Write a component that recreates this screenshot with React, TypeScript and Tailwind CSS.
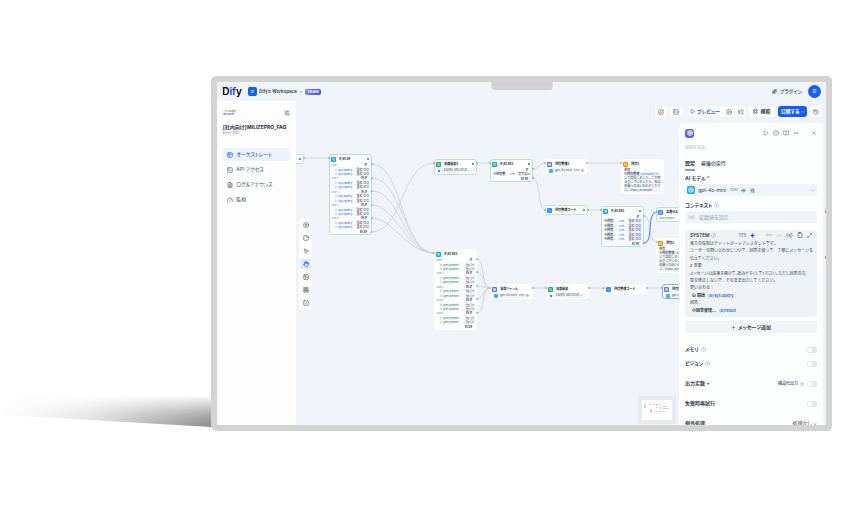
import type { ReactNode } from 'react'
import { clsx } from 'clsx'
import {
  Aperture,
  ArrowRightLeft,
  BookOpen,
  Braces,
  ChevronDown,
  CircleHelp,
  CirclePlay,
  CirclePlus,
  Clipboard,
  Code,
  Ellipsis,
  Eye,
  FileText,
  Gauge,
  GitFork,
  Hand,
  History,
  House,
  Image,
  LayoutGrid,
  ListTree,
  Maximize2,
  MessageSquareText,
  MousePointer2,
  PanelsTopLeft,
  Play,
  Plus,
  Puzzle,
  Rows2,
  SlidersHorizontal,
  Sparkle,
  SquarePen,
  SquareSlash,
  SquareTerminal,
  StickyNote,
  X,
} from 'lucide-react'

const navItems = [
  { label: 'オーケストレート', icon: PanelsTopLeft, active: true },
  { label: 'API アクセス', icon: SquareTerminal },
  { label: 'ログ＆アナウンス', icon: FileText },
  { label: '監視', icon: Gauge },
]

const tools = [
  { label: '追加', icon: CirclePlus },
  { label: 'メモ', icon: StickyNote },
  { label: 'ポインター', icon: MousePointer2 },
  { label: 'ハンド', icon: Hand, active: true },
  { label: 'エクスポート', icon: Image },
  { label: '整列', icon: LayoutGrid },
  { label: '最大化', icon: SquareSlash },
]

// canvas edges, in the same coordinates as the nodes
const edges = [
  'M8 57H33',
  'M76 63C106 63 106 152 138 152',
  'M76 77C106 77 108 152 138 152',
  'M76 90C104 90 108 152 138 152',
  'M76 104C100 104 110 152 138 152',
  'M76 117C96 117 112 152 138 152',
  'M76 131C106 131 106 62 138 62',
  'M181 62H194',
  'M237 68C244 68 242 62 249 62',
  'M237 77C244 77 242 109 249 109',
  'M291 62H325',
  'M292 109H305',
  'M348 115C356 115 352 141 361 141',
  'M181 158C189 158 185 187 194 187',
  'M181 171C188 171 187 187 194 187',
  'M181 185C187 185 188 187 194 187',
  'M181 198C188 198 187 187 194 187',
  'M181 212C189 212 185 187 194 187',
  'M237 187H250',
  'M293 187H308',
  'M351 187H366',
]

const ports = [
  [8, 57], [33, 57], [76, 63], [76, 77], [76, 90], [76, 104], [76, 117], [76, 131],
  [138, 62], [181, 62], [194, 62], [237, 68], [237, 77], [249, 62], [291, 62], [325, 62],
  [249, 109], [292, 109], [305, 109], [348, 115], [348, 142], [361, 111], [361, 141],
  [138, 152], [181, 158], [181, 171], [181, 185], [181, 198], [181, 212],
  [194, 187], [237, 187], [250, 187], [293, 187], [308, 187], [351, 187], [366, 187],
]

const kinds = {
  branch: { icon: GitFork, color: 'bg-[#06aed4]' },
  knowledge: { icon: BookOpen, color: 'bg-[#16b364]' },
  llm: { icon: Aperture, color: 'bg-[#6172f3]' },
  code: { icon: Code, color: 'bg-[#2e90fa]' },
  assign: { icon: ArrowRightLeft, color: 'bg-[#2e90fa]' },
  answer: { icon: MessageSquareText, color: 'bg-[#f79009]' },
}

type NodeProps = {
  place: string
  kind: keyof typeof kinds
  title?: string
  border?: string
  done?: boolean
  children?: ReactNode
}

function FlowNode({ place, kind, title, border = 'border-white', done, children }: NodeProps) {
  const { icon: Icon, color } = kinds[kind]
  return (
    <div className={clsx('absolute w-[43px] rounded-[3px] border bg-white px-px', place, border)}>
      <div className="flex h-2 items-center gap-[3px]">
        <span className={clsx('grid size-[5px] shrink-0 place-items-center rounded-[1px] text-white', color)}>
          <Icon className="size-[3px]" strokeWidth={3} />
        </span>
        {title && <span className="text-[3px] font-bold whitespace-nowrap text-[#101828]">{title}</span>}
        {done && <span className="mr-px ml-auto size-[2px] shrink-0 rounded-full bg-[#079455]" />}
      </div>
      {children}
    </div>
  )
}

function Condition({ name, color }: { name: string; color: string }) {
  return (
    <div className="ml-[3px] flex items-center justify-between bg-[#f9fafb] px-px">
      <span className={clsx('flex items-center gap-px', color)}>
        <Braces className="size-[2px]" />
        {name}
      </span>
      <span className="font-bold text-[#344054]">
        含む <span className="font-normal text-[#667085]">回答</span>
      </span>
    </div>
  )
}

function CaseRows({ name, color }: { name: string; color: string }) {
  return (
    <div className="grid h-[71px] auto-rows-fr text-[3px] leading-[4px] whitespace-nowrap">
      {[1, 2, 3, 4, 5].map((n) => (
        <div key={n} className="row-span-3 grid grid-rows-3">
          <div className="flex justify-between pr-[3px]">
            <span className="text-[2px] text-[#667085]">CASE {n}</span>
            <b className="text-[#344054]">{n === 1 ? 'IF' : 'ELIF'}</b>
          </div>
          <Condition name={name} color={color} />
          <Condition name={name} color={color} />
        </div>
      ))}
      <b className="pr-[3px] text-right text-[#344054]">ELSE</b>
    </div>
  )
}

function Model() {
  return (
    <div className="mx-px flex h-[5px] items-center gap-[2px] rounded-[1px] bg-[#f2f4f7] px-px text-[3px] whitespace-nowrap text-[#475467]">
      <span className="size-[4px] rounded-[1px] bg-[#3fb5e8]" />
      gpt-4o-mini
      <span className="text-[2px]">CHAT</span>
      <Eye className="size-[3px]" />
    </div>
  )
}

function Dataset() {
  return (
    <div className="mx-px flex h-[5px] items-center gap-[2px] rounded-[1px] bg-[#f2f4f7] px-px text-[3px] whitespace-nowrap text-[#475467]">
      <span className="size-[2px] rounded-full bg-[#444ce7]" />
      【社内】MILIZEの...
    </div>
  )
}

function AnswerText() {
  return (
    <div className="mx-px pb-px text-[3px] leading-[4px] text-[#475467]">
      <b>回答</b>
      <p className="bg-[#f2f4f7] break-all">
        <b>小回答整理</b> <span className="text-[#155eef]">{'{x}'}result</span>
        について回答しました。ご不明点がございましたら、担当部署へお問い合わせください。https://example
      </p>
    </div>
  )
}

function Canvas() {
  const green = 'border-[#b9e3d0]'
  return (
    <div className="absolute inset-0 overflow-hidden bg-[#f0f3f7]">
      <svg className="absolute top-0 left-0 h-full w-full" fill="none">
        {edges.map((d) => (
          <path key={d} d={d} stroke="#c5cad3" strokeWidth="0.7" />
        ))}
      </svg>
      <FlowNode place="top-[53px] -left-[35px]" kind="code" border={green} done />
      <FlowNode place="top-[53px] left-[33px]" kind="branch" title="IF/ELSE" border={green} done>
        <CaseRows name="sys.query" color="text-[#155eef]" />
      </FlowNode>
      <FlowNode place="top-[58px] left-[138px]" kind="knowledge" title="知識検索2" border={green} done>
        <Dataset />
        <div className="h-px" />
      </FlowNode>
      <FlowNode place="top-[58px] left-[194px]" kind="branch" title="IF/ELSE2" border={green} done>
        <div className="grid h-[13px] grid-rows-3 px-px text-[3px] leading-[4px] text-[#344054]">
          <b className="pr-[2px] text-right">IF</b>
          <div className="flex justify-between whitespace-nowrap">
            <b>小回答整..</b>
            <span className="text-[2px] text-[#155eef]">{'{x}'}res..</span>
            <b>空でない</b>
          </div>
          <b className="pr-[2px] text-right">ELSE</b>
        </div>
      </FlowNode>
      <FlowNode place="top-[58px] left-[249px]" kind="llm" title="回答整理2">
        <Model />
      </FlowNode>
      <FlowNode place="top-[58px] left-[325px]" kind="answer" title="回答2">
        <AnswerText />
      </FlowNode>
      <FlowNode place="top-[104px] left-[249px]" kind="code" title="回答整理コード" border={green} done />
      <FlowNode place="top-[105px] left-[305px]" kind="branch" title="IF/ELSE3" border={green} done>
        <div className="grid h-[31px] auto-rows-fr px-px text-[3px] leading-[4px] text-[#344054]">
          <b className="pr-[2px] text-right">IF</b>
          {[1, 2, 3, 4, 5].map((n) => (
            <div key={n} className="flex justify-between bg-[#f9fafb] whitespace-nowrap">
              <b>小回答..</b>
              <span className="text-[2px] text-[#155eef]">{'{x}'}res..</span>
              <span>
                <b>含む</b> <span className="text-[#444ce7]">回答</span>
              </span>
            </div>
          ))}
          <b className="pr-[2px] text-right">ELSE</b>
        </div>
      </FlowNode>
      <FlowNode place="top-[106px] left-[360px]" kind="assign" title="変数代入" border={green}>
        <p className="px-px text-[2px] leading-[5px] text-[#067647]">given_questions</p>
      </FlowNode>
      <FlowNode place="top-[137px] left-[360px]" kind="answer" title="回答3">
        <AnswerText />
      </FlowNode>
      <FlowNode place="top-[148px] left-[138px]" kind="branch" title="IF/ELSE3">
        <div className="[&_span]:text-[2px]">
          <CaseRows name="given_questions" color="text-[#067647]" />
        </div>
      </FlowNode>
      <FlowNode place="top-[183px] left-[194px]" kind="llm" title="質問ジャンル">
        <Model />
      </FlowNode>
      <FlowNode place="top-[183px] left-[250px]" kind="knowledge" title="知識検索">
        <Dataset />
      </FlowNode>
      <FlowNode place="top-[183px] left-[308px]" kind="code" title="回答整理コード" />
      <FlowNode place="top-[183px] left-[366px]" kind="llm" title="回答整理" border="border-[#84adff]">
        <Model />
      </FlowNode>
      <span className="absolute top-[109px] right-0 h-[3px] w-px bg-[#f79009]" />
      <span className="absolute top-[155px] right-0 h-[3px] w-px bg-[#f79009]" />
      <svg className="absolute top-0 left-0 h-full w-full" fill="none">
        <path d="M348 142C358 142 350 111 361 111" stroke="#2970ff" strokeWidth="0.9" />
        {ports.map(([x, y]) => (
          <rect key={`${x}-${y}`} x={x - 0.5} y={y - 1} width="1" height="2" fill="#7b93c4" />
        ))}
      </svg>
    </div>
  )
}

function ToolPalette() {
  return (
    <div className="mt-[95px] ml-[3px] flex w-[13px] flex-col items-center gap-[3px] self-start rounded-[3px] bg-white py-[2px]">
      {tools.map(({ label, icon: Icon, active }) => (
        <button
          key={label}
          aria-label={label}
          className={clsx(
            'grid h-[10px] w-[11px] place-items-center rounded-[2px]',
            active ? 'bg-[#e0eaff] text-[#155eef]' : 'text-[#495464]',
          )}
        >
          <Icon className="size-[6px]" strokeWidth={2.5} />
        </button>
      ))}
    </div>
  )
}

function MiniMap() {
  return (
    <div className="mt-auto mr-[3px] mb-px ml-auto h-[28px] w-[38px] shrink-0 bg-[#e7eaee] p-1">
      <svg viewBox="0 0 30 20" className="h-full w-full bg-white" fill="#d0d5dd">
        <rect x="2" y="4" width="2" height="4" />
        <rect x="7" y="4" width="2" height="1" />
        <rect x="10" y="4" width="3" height="1" />
        <rect x="14" y="4" width="2" height="2" />
        <rect x="18" y="4" width="2" height="1" />
        <rect x="14" y="7" width="2" height="1" />
        <rect x="17" y="7" width="2" height="2" />
        <rect x="20" y="6" width="5" height="1" />
        <rect x="21" y="8" width="6" height="1" />
        <rect x="8" y="9" width="2" height="4" />
        <rect x="11" y="11" width="2" height="1" />
        <rect x="14" y="11" width="2" height="1" />
        <rect x="17" y="11" width="2" height="1" />
        <rect x="20" y="11" width="3" height="1" />
      </svg>
    </div>
  )
}

function TopBar() {
  const chip = 'flex h-[11px] items-center justify-center rounded-[3px] bg-white text-[#344054]'
  return (
    <div className="relative flex justify-end gap-[3px] pt-[5px] pr-1 text-[5px] font-semibold [font-feature-settings:'palt']">
      <button aria-label="会話変数" className={clsx(chip, 'w-3')}>
        <SquarePen className="size-[6px]" />
      </button>
      <button aria-label="環境変数" className={clsx(chip, 'mr-[3px] w-3')}>
        <Rows2 className="size-[6px]" />
      </button>
      <div className={clsx(chip, 'w-[58px] gap-[6px]')}>
        <button className="flex items-center gap-[2px] text-[#155eef]">
          <Play className="size-[5px]" strokeWidth={3} />
          プレビュー
        </button>
        <button aria-label="履歴">
          <CirclePlay className="size-[6px]" />
        </button>
        <button aria-label="チェックリスト">
          <ListTree className="size-[6px]" />
        </button>
      </div>
      <button className={clsx(chip, 'w-[26px] gap-[2px]')}>
        <LayoutGrid className="size-[5px]" />
        機能
      </button>
      <button className="flex h-[11px] w-[29px] items-center justify-center gap-px rounded-[3px] bg-[#155eef] text-white">
        公開する
        <ChevronDown className="size-1" strokeWidth={3} />
      </button>
      <button aria-label="バージョン履歴" className={clsx(chip, 'w-3')}>
        <History className="size-[6px]" />
      </button>
    </div>
  )
}

function Switch({ label }: { label: string }) {
  return (
    <input
      type="checkbox"
      role="switch"
      aria-label={label}
      className="h-[6px] w-[10px] appearance-none rounded-[2px] border border-[#e4e7ec] bg-linear-to-r from-white from-50% to-[#e4e7ec] to-50%"
    />
  )
}

function Setting({ label, help, mark, extra }: { label: string; help?: boolean; mark?: string; extra?: string }) {
  return (
    <div className="flex h-[7px] items-center gap-[2px]">
      <span className="font-bold">{label}</span>
      {help && <CircleHelp className="size-[5px] text-[#98a2b3]" />}
      {mark && <span className="text-[4px]">{mark}</span>}
      <span className="ml-auto flex items-center gap-[2px]">
        {extra && (
          <>
            <span className="text-[4px] font-medium">{extra}</span>
            <CircleHelp className="mr-px size-1 text-[#98a2b3]" />
          </>
        )}
        <Switch label={label} />
      </span>
    </div>
  )
}

function Chip({ source, name }: { source: ReactNode; name: string }) {
  return (
    <p className="flex items-center gap-[3px] pl-[2px] font-bold">
      <span className="flex items-center gap-px">{source}</span>
      <span className="font-semibold text-[#155eef]">{`{x}${name}`}</span>
    </p>
  )
}

function DetailPanel() {
  return (
    <aside className="relative mr-[3px] flex w-[144px] shrink-0 flex-col overflow-hidden rounded-t-[4px] bg-[#fdfefe] px-[6px] pt-[5px] text-[5px] leading-[7px] text-[#354052] [font-feature-settings:'palt']">
      <div className="flex h-[10px] shrink-0 items-center gap-1 text-[#667085]">
        <span className="mr-auto grid size-[9px] place-items-center rounded-[3px] bg-[#5b5fe0] text-white">
          <Aperture className="size-[6px]" strokeWidth={2.5} />
        </span>
        <button aria-label="実行"><Play className="size-[6px]" /></button>
        <button aria-label="ヘルプ"><CircleHelp className="size-[6px]" /></button>
        <button aria-label="ドキュメント"><BookOpen className="size-[6px]" /></button>
        <button aria-label="その他"><Ellipsis className="size-[6px]" /></button>
        <button aria-label="閉じる" className="ml-2"><X className="size-[6px]" /></button>
      </div>
      <input
        aria-label="説明"
        placeholder="説明を追加..."
        className="mt-[6px] h-[7px] w-full shrink-0 text-[4px] placeholder:text-[#b3bac6]"
      />
      <div className="mt-2 flex h-3 shrink-0 gap-[6px]">
        <button className="border-b-2 border-[#7fa3e8] pb-[2px] font-bold text-[#101828]">設定</button>
        <button className="pb-1 font-medium">最後の実行</button>
      </div>
      <label htmlFor="model" className="mt-1 shrink-0 font-bold">
        AI モデル <span className="text-[#d92d20]">*</span>
      </label>
      <div className="mt-[2px] flex h-3 shrink-0 items-center gap-[3px] rounded-[3px] bg-[#f0f3f7] px-[2px]">
        <span className="grid size-[8px] place-items-center rounded-[2px] bg-[#11a8f0] text-white">
          <Aperture className="size-[6px]" />
        </span>
        <select id="model" className="appearance-none text-[5px]">
          <option>gpt-4o-mini</option>
        </select>
        <span className="text-[3px] text-[#667085]">CHAT</span>
        <Eye className="size-[5px]" />
        <SlidersHorizontal className="ml-px size-[5px]" />
        <ChevronDown className="ml-auto size-[5px] text-[#667085]" />
      </div>
      <div className="mt-[6px] flex shrink-0 items-center gap-[2px] font-bold">
        コンテキスト
        <CircleHelp className="size-[5px] text-[#98a2b3]" />
      </div>
      <button className="mt-[2px] flex h-3 shrink-0 items-center gap-1 rounded-[3px] bg-[#f0f3f7] px-[3px] text-[#98a2b3]">
        <span>{'{x}'}</span>
        変数値を設定
      </button>
      <section className="mt-[7px] shrink-0 rounded-[3px] bg-[#f0f3f5] px-[5px] pb-[3px]">
        <div className="flex h-[10px] items-center gap-[4px]">
          <span className="flex items-center gap-[2px] font-['Roboto'] font-semibold">
            SYSTEM <CircleHelp className="size-[5px] text-[#98a2b3]" />
          </span>
          <span className="ml-auto text-[#667085]">175</span>
          <Sparkle className="size-[5px] fill-[#155eef] text-[#155eef]" />
          <span className="ml-[6px] text-[3px] text-[#98a2b3]">Jinja</span>
          <input type="checkbox" role="switch" aria-label="Jinja" className="h-[3px] w-[6px] appearance-none rounded-[1px] bg-[#e0e4ea]" />
          <span>{'{x}'}</span>
          <button aria-label="コピー"><Clipboard className="size-[6px]" /></button>
          <button aria-label="拡大"><Maximize2 className="size-[5px]" /></button>
        </div>
        <div className="grid h-[74px] auto-rows-fr text-[4px] whitespace-nowrap [font-feature-settings:normal]">
          <p>貴方の役割はチャットボットアシスタントです。</p>
          <p>ユーザーの問い合わせについて、回答を使って、丁寧にメッセージを</p>
          <p>伝えてください。</p>
          <p># 重要</p>
          <p className="[font-feature-settings:'palt']">メッセージは段落を開けて、読みやすくしてください。ただし回答の文</p>
          <p>章を修正しないで、そのまま出力してください。</p>
          <p>問い合わせ：</p>
          <Chip
            source={
              <>
                <House className="size-1" strokeWidth={3} />
                開始
              </>
            }
            name="sys.query"
          />
          <p>回答：</p>
          <Chip source="小回答整理..." name="result" />
        </div>
      </section>
      <button className="mt-[4px] flex h-3 shrink-0 items-center justify-center gap-[2px] rounded-[3px] bg-[#f0f3f7] font-semibold">
        <Plus className="size-[5px]" />
        メッセージ追加
      </button>
      <div className="mt-[13px] flex shrink-0 flex-col gap-[13px]">
        <div className="flex flex-col gap-[7px]">
          <Setting label="メモリ" help />
          <Setting label="ビジョン" help />
        </div>
        <Setting label="出力変数" mark="▾" extra="構造化出力" />
        <Setting label="失敗時再試行" />
        <div className="flex justify-between">
          <span className="font-bold">例外処理</span>
          <button>処理なし ⌄</button>
        </div>
      </div>
    </aside>
  )
}

function Sidebar() {
  return (
    <nav className="w-[79px] shrink-0 bg-[#fdfdfe] px-[5px] pt-[9px] text-[5px] text-[#495464] [font-feature-settings:'palt']">
      <div className="flex h-[5px] justify-between px-px text-[2px] leading-[3px]">
        <span className="font-semibold">
          ‹ アプリに戻る
          <br />
          MILIZEPRO
        </span>
        <SlidersHorizontal className="size-[6px]" />
      </div>
      <h1 className="mt-2 leading-[8px] font-bold whitespace-nowrap text-[#1d2939]">【社内向け】MILIZEPRO_FAQ</h1>
      <p className="text-[3px] leading-[5px]">チャットフロー</p>
      <ul className="mx-px mt-3 flex flex-col gap-[2px]">
        {navItems.map(({ label, icon: Icon, active }) => (
          <li key={label}>
            <a
              href="#"
              className={clsx(
                'flex h-[13px] items-center gap-[3px] rounded-[3px] px-1',
                active && 'bg-[#eef1fe] font-medium text-[#155eef]',
              )}
            >
              <Icon className="size-[6px]" strokeWidth={2.5} />
              {label}
            </a>
          </li>
        ))}
      </ul>
    </nav>
  )
}

function Header() {
  return (
    <header className="relative flex h-[19px] shrink-0 items-center bg-[#f0f3f7] px-[5px] text-[5px] font-medium text-[#354052]">
      <span className="mr-[6px] text-[10px] font-semibold text-black">
        D<span className="text-[#0033ff]">if</span>y
      </span>
      <span className="grid size-[9px] place-items-center rounded-[2px] bg-[#155eef] text-[4px] text-white">D</span>
      <button className="ml-[2px] flex items-center gap-[2px] font-['Roboto']">
        Dify's Workspace
        <ChevronDown className="size-1" strokeWidth={3} />
      </button>
      <span className="ml-[2px] grid h-[6px] w-4 place-items-center rounded-[2px] bg-linear-to-r from-[#8080f5] to-[#3f4de0] text-[4px] font-bold text-white">
        TEAM
      </span>
      <span className="absolute top-0 left-1/2 h-2 w-[61px] -translate-x-1/2 rounded-b-[3px] bg-[#d1d1d1]" />
      <a href="#" className="mr-[6px] ml-auto flex items-center gap-[3px] [font-feature-settings:'palt']">
        <Puzzle className="size-[5px] fill-[#98a2b3]" />
        プラグイン
      </a>
      <button className="size-[13px] rounded-full bg-[#155eef] text-[5px] text-white">D</button>
    </header>
  )
}

export default function App() {
  return (
    <div className="flex h-screen bg-white pt-[76px] pb-[88px] font-['Inter','Noto_Sans_CJK_JP',sans-serif]">
      {/* Shadow cast on the desk by the monitor */}
      <div className="w-1/4 shrink-0 self-end pb-1">
        <div className="h-8 bg-linear-to-b from-transparent via-[#aaaaaa] via-60% to-[#8a8a8a] [clip-path:polygon(0_0,100%_0,100%_100%,0_62%)] [mask-image:linear-gradient(to_right,transparent,rgba(0,0,0,0.25)_40%,black)]" />
      </div>

      <div className="mr-[13px] flex min-w-0 flex-1 flex-col overflow-hidden rounded-[5px] border-[6px] border-[#d3d3d3]">
        <Header />
        <div className="flex min-h-0 flex-1">
          <Sidebar />
          <main className="relative flex min-w-0 flex-1 flex-col">
            <Canvas />
            <TopBar />
            <div className="relative flex min-h-0 flex-1 pt-[6px]">
              <ToolPalette />
              <MiniMap />
              <DetailPanel />
            </div>
          </main>
        </div>
      </div>
    </div>
  )
}
